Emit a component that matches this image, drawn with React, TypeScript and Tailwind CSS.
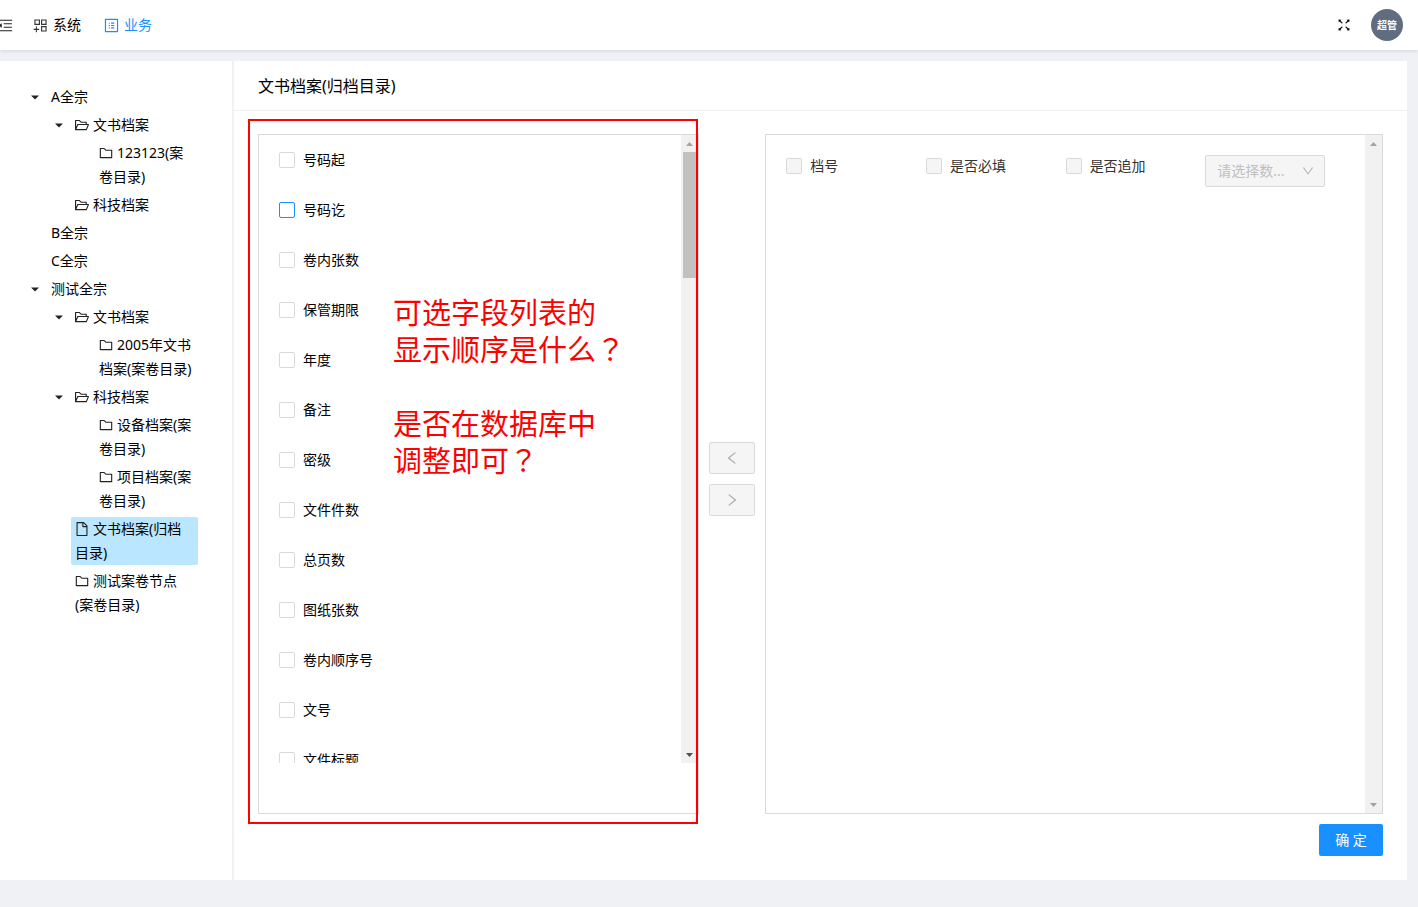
import React, { useState } from "react";
import {
  AiOutlineAppstoreAdd,
  AiOutlineDown,
  AiOutlineFile,
  AiOutlineFolder,
  AiOutlineFolderOpen,
  AiOutlineFullscreen,
  AiOutlineLeft,
  AiOutlineMenuFold,
  AiOutlineProfile,
  AiOutlineRight,
} from "react-icons/ai";

interface TreeItem {
  key: string;
  title: string;
  icon?: "open" | "folder" | "file";
  children?: TreeItem[];
}

const treeData: TreeItem[] = [
  {
    key: "a",
    title: "A全宗",
    children: [
      {
        key: "a-1",
        title: "文书档案",
        icon: "open",
        children: [{ key: "a-1-1", title: "123123(案卷目录)", icon: "folder" }],
      },
      { key: "a-2", title: "科技档案", icon: "open" },
    ],
  },
  { key: "b", title: "B全宗" },
  { key: "c", title: "C全宗" },
  {
    key: "t",
    title: "测试全宗",
    children: [
      {
        key: "t-1",
        title: "文书档案",
        icon: "open",
        children: [
          { key: "t-1-1", title: "2005年文书档案(案卷目录)", icon: "folder" },
        ],
      },
      {
        key: "t-2",
        title: "科技档案",
        icon: "open",
        children: [
          { key: "t-2-1", title: "设备档案(案卷目录)", icon: "folder" },
          { key: "t-2-2", title: "项目档案(案卷目录)", icon: "folder" },
        ],
      },
      { key: "t-3", title: "文书档案(归档目录)", icon: "file" },
      { key: "t-4", title: "测试案卷节点(案卷目录)", icon: "folder" },
    ],
  },
];

const fields = [
  "号码起",
  "号码讫",
  "卷内张数",
  "保管期限",
  "年度",
  "备注",
  "密级",
  "文件件数",
  "总页数",
  "图纸张数",
  "卷内顺序号",
  "文号",
  "文件标题",
];

const icons = {
  open: AiOutlineFolderOpen,
  folder: AiOutlineFolder,
  file: AiOutlineFile,
};

interface TreeNodeProps {
  item: TreeItem;
  selected: string;
  onSelect: (key: string) => void;
}

const TreeNode = ({ item, selected, onSelect }: TreeNodeProps) => {
  const [open, setOpen] = useState(true);
  const Icon = item.icon ? icons[item.icon] : null;

  return (
    <li className="pt-1">
      <div className="flex items-start">
        {item.children ? (
          <button
            type="button"
            aria-label={item.title}
            aria-expanded={open}
            onClick={() => setOpen(!open)}
            className="flex h-6 w-6 shrink-0 items-center justify-center"
          >
            <svg width="8" height="5" viewBox="0 0 8 5" className="fill-[#222]">
              <path d="M0 0.5h8L4 4.6z" />
            </svg>
          </button>
        ) : (
          <span className="h-6 w-6 shrink-0" />
        )}
        <button
          type="button"
          onClick={() => onSelect(item.key)}
          className={
            selected === item.key
              ? "rounded-xs bg-[#bae7ff] px-1 text-left leading-6"
              : "rounded-xs px-1 text-left leading-6"
          }
        >
          {Icon && (
            <Icon className="mr-[3px] mb-[3px] -ml-px inline-block size-4 text-[#222]" />
          )}
          {item.title}
        </button>
      </div>
      {item.children && open && (
        <ul className="pl-6">
          {item.children.map((child) => (
            <TreeNode
              key={child.key}
              item={child}
              selected={selected}
              onSelect={onSelect}
            />
          ))}
        </ul>
      )}
    </li>
  );
};

interface CheckProps {
  label: string;
  active?: boolean;
  disabled?: boolean;
}

const Check = ({ label, active, disabled }: CheckProps) => (
  <label className="flex items-center gap-2 leading-[22px] has-disabled:text-[#333]">
    <input
      type="checkbox"
      disabled={disabled}
      className={
        active
          ? "size-4 appearance-none rounded-xs border border-[#1890ff] bg-white"
          : "size-4 appearance-none rounded-xs border border-[#d9d9d9] bg-white checked:bg-[#1890ff] disabled:bg-[#f5f5f5]"
      }
    />
    {label}
  </label>
);

const Arrow = ({ down, dark }: { down?: boolean; dark?: boolean }) => (
  <span className="flex h-[17px] shrink-0 items-center justify-center">
    <svg
      width="8"
      height="4"
      viewBox="0 0 8 4"
      className={dark ? "fill-[#505050]" : "fill-[#a3a3a3]"}
    >
      <path d={down ? "M0 0h7L3.5 4z" : "M0 4h7L3.5 0z"} />
    </svg>
  </span>
);

// full-width mark, centred in its cell
const Question = () => (
  <span className="font-['Noto_Sans_CJK_TC',sans-serif] leading-none">？</span>
);

export default function App() {
  const [selected, setSelected] = useState("t-3");

  return (
    <div className="flex min-h-screen flex-col bg-[#f0f1f5] font-['Noto_Sans','Noto_Sans_CJK_SC',sans-serif] text-sm text-black">
      <header className="relative flex h-[50px] items-center justify-between bg-white pr-[15px] shadow-[0_1px_4px_rgba(0,21,41,0.12)]">
        <nav className="-ml-[3px] flex items-center">
          <button type="button" aria-label="菜单" className="mr-[18px]">
            <AiOutlineMenuFold className="size-[17px] text-[#222]" />
          </button>
          <a href="#system" className="mr-[22px] flex items-center gap-1">
            <AiOutlineAppstoreAdd className="size-[17px] text-[#333]" />
            系统
          </a>
          <a href="#business" className="flex items-center gap-1 text-[#1890ff]">
            <AiOutlineProfile className="size-[17px]" />
            业务
          </a>
        </nav>
        <div className="flex items-center gap-[19px]">
          <button type="button" aria-label="全屏">
            <AiOutlineFullscreen className="size-4" />
          </button>
          <button
            type="button"
            className="size-8 rounded-full bg-[#606d80] text-[10px] font-bold text-white"
          >
            超管
          </button>
        </div>
      </header>

      <div className="mt-[11px] mr-[11px] flex items-stretch gap-0.5">
        <aside className="w-[232px] shrink-0 bg-white pt-5 pr-[34px] pl-[23px]">
          <ul>
            {treeData.map((item) => (
              <TreeNode
                key={item.key}
                item={item}
                selected={selected}
                onSelect={setSelected}
              />
            ))}
          </ul>
        </aside>

        <main className="min-w-0 flex-1 bg-white">
          <h1 className="border-b border-[#f0f0f0] px-6 pt-[13px] pb-3 text-base leading-6">
            文书档案(归档目录)
          </h1>

          <div className="px-6 pt-[23px] pb-6">
            <div className="grid h-[680px] grid-cols-[5fr_66px_7fr]">
              <section className="relative border border-[#d9d9d9]">
                <div className="flex h-[628px] overflow-hidden">
                  <ul className="flex-1 pl-5">
                    {fields.map((field, index) => (
                      <li key={field} className="flex h-[50px] items-center">
                        <Check label={field} active={index === 1} />
                      </li>
                    ))}
                  </ul>
                  <div className="flex w-[17px] flex-col bg-[#f1f1f1]">
                    <Arrow />
                    <div className="ml-0.5 h-[126px] bg-[#c1c1c1]" />
                    <div className="flex-1" />
                    <Arrow down dark />
                  </div>
                </div>

                {/* review note over the field list */}
                <div className="pointer-events-none absolute -top-4 right-0 -bottom-[11px] -left-[11px] border-2 border-[#f00]">
                  <p className="pt-[173px] pl-[143px] text-[29px] leading-[37px] text-[#f00]">
                    可选字段列表的
                    <br />
                    显示顺序是什么
                    <Question />
                    <br />
                    <br />
                    是否在数据库中
                    <br />
                    调整即可
                    <Question />
                  </p>
                </div>
              </section>

              <div className="flex flex-col items-center justify-center gap-2.5 pt-2.5">
                <button
                  type="button"
                  disabled
                  aria-label="左移"
                  className="flex h-8 w-[46px] items-center justify-center rounded-xs border border-[#d9d9d9] bg-[#f5f5f5] text-[#b0b0b0]"
                >
                  <AiOutlineLeft className="size-4" />
                </button>
                <button
                  type="button"
                  disabled
                  aria-label="右移"
                  className="flex h-8 w-[46px] items-center justify-center rounded-xs border border-[#d9d9d9] bg-[#f5f5f5] text-[#b0b0b0]"
                >
                  <AiOutlineRight className="size-4" />
                </button>
              </div>

              <section className="flex border border-[#d9d9d9]">
                <div className="grid flex-1 grid-cols-4 items-start p-5">
                  <Check label="档号" disabled />
                  <Check label="是否必填" disabled />
                  <Check label="是否追加" disabled />
                  <div className="relative w-[120px]">
                    <select
                      disabled
                      aria-label="请选择数"
                      className="block h-8 w-full appearance-none rounded-xs border border-[#d9d9d9] bg-[#f5f5f5] pl-[11px] text-[#bfbfbf] opacity-100"
                    >
                      <option>请选择数...</option>
                    </select>
                    <AiOutlineDown className="pointer-events-none absolute top-[9px] right-2.5 size-3.5 text-[#b8b8b8]" />
                  </div>
                </div>
                <div className="flex w-[17px] flex-col justify-between bg-[#f1f1f1]">
                  <Arrow />
                  <Arrow down />
                </div>
              </section>
            </div>

            <div className="mt-2.5 flex justify-end">
              <button
                type="button"
                className="h-8 w-16 rounded-xs bg-[#1890ff] text-white"
              >
                确 定
              </button>
            </div>
          </div>
        </main>
      </div>
    </div>
  );
}
